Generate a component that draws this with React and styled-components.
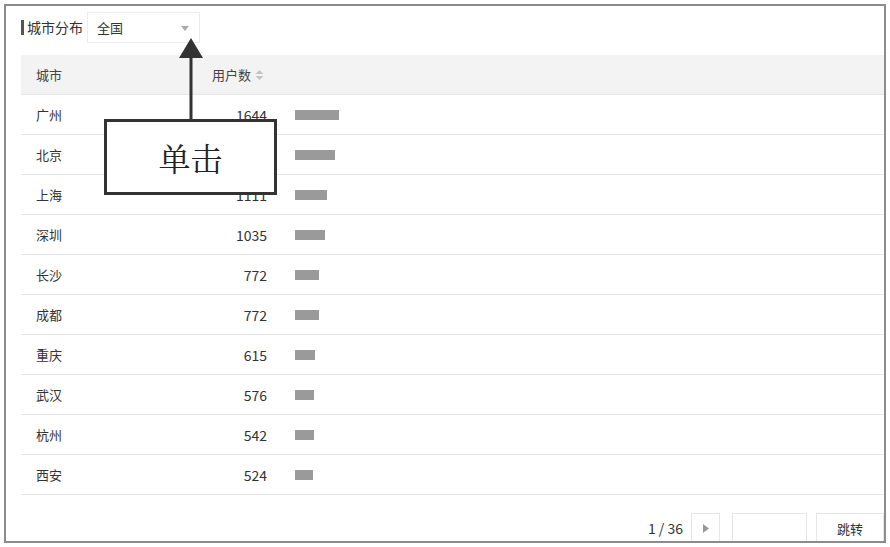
import React from 'react';
import styled, { createGlobalStyle } from 'styled-components';

const GlobalStyle = createGlobalStyle`
  html, body {
    margin: 0;
    padding: 0;
    background: #fff;
  }
  body {
    font-family: "Microsoft YaHei", "Noto Sans CJK SC", "Noto Sans", sans-serif;
    color: #333;
  }
`;

const cities = [
  { name: '广州', users: 1644 },
  { name: '北京', users: 1457 },
  { name: '上海', users: 1111 },
  { name: '深圳', users: 1035 },
  { name: '长沙', users: 772 },
  { name: '成都', users: 772 },
  { name: '重庆', users: 615 },
  { name: '武汉', users: 576 },
  { name: '杭州', users: 542 },
  { name: '西安', users: 524 },
];

// bar length grows with the count, with a small minimum
const barWidth = (n) => Math.round(6 + n * 0.0232);

export default function App() {
  return (
    <>
      <GlobalStyle />
      <Frame>
        <Toolbar>
          <Title>城市分布</Title>
          <Select>
            <span>全国</span>
            <Caret />
          </Select>
        </Toolbar>

        <Table>
          <HeadRow>
            <Cell>城市</Cell>
            <Cell>
              用户数
              <SortIcon width="9" height="10" viewBox="0 0 9 10">
                <path d="M4.5 0 L8.5 4 L0.5 4 Z" fill="#c4c4c4" />
                <path d="M4.5 10 L8.5 6 L0.5 6 Z" fill="#c4c4c4" />
              </SortIcon>
            </Cell>
            <BarCell />
          </HeadRow>
          {cities.map((c) => (
            <Row key={c.name}>
              <Cell>{c.name}</Cell>
              <NumCell>{c.users}</NumCell>
              <BarCell>
                <Bar style={{ width: barWidth(c.users) }} />
              </BarCell>
            </Row>
          ))}
        </Table>

        <Pager>
          <PageInfo>1 / 36</PageInfo>
          <NextBtn>
            <svg width="6" height="9" viewBox="0 0 6 9">
              <path d="M0 0 L6 4.5 L0 9 Z" fill="#999" />
            </svg>
          </NextBtn>
          <JumpInput />
          <JumpBtn>跳转</JumpBtn>
        </Pager>

        <Callout>
          <Arrow>
            <svg width="26" height="84" viewBox="0 0 26 84">
              <path d="M13 0 L25 20 L1 20 Z" fill="#333" />
              <rect x="11.5" y="19" width="3" height="65" fill="#333" />
            </svg>
          </Arrow>
          <CalloutBox>单击</CalloutBox>
        </Callout>
      </Frame>
    </>
  );
}

const Frame = styled.div`
  position: relative;
  box-sizing: border-box;
  margin: 4px;
  height: 539px;
  border: 2px solid #8c8c8c;
  padding: 6px 0 0 15px;
  display: flex;
  flex-direction: column;
  overflow: hidden;
  background: #fff;
`;

const Toolbar = styled.div`
  display: flex;
  align-items: center;
  gap: 4px;
  height: 31px;
`;

const Title = styled.div`
  font-size: 14px;
  color: #333;
  padding-left: 3px;
  border-left: 3px solid #555;
  line-height: 15px;
`;

const Select = styled.div`
  box-sizing: border-box;
  width: 113px;
  height: 31px;
  border: 1px solid #ececec;
  display: flex;
  align-items: center;
  justify-content: space-between;
  padding: 0 10px 0 9px;
  font-size: 13px;
  color: #333;
`;

const Caret = styled.span`
  width: 0;
  height: 0;
  border-left: 4px solid transparent;
  border-right: 4px solid transparent;
  border-top: 5px solid #aaa;
  margin-top: 2px;
`;

const Table = styled.div`
  margin-top: 12px;
  display: flex;
  flex-direction: column;
`;

const rowGrid = `
  box-sizing: border-box;
  display: grid;
  grid-template-columns: 191px 55px 1fr;
  align-items: center;
  height: 40px;
  border-bottom: 1px solid #e6e6e6;
  font-size: 13px;
`;

const HeadRow = styled.div`
  ${rowGrid}
  height: 40px;
  background: #f3f3f3;
  color: #444;
  white-space: nowrap;
`;

const Row = styled.div`
  ${rowGrid}
  color: #333;
`;

const Cell = styled.div`
  display: flex;
  align-items: center;
  &:first-child {
    padding-left: 15px;
  }
`;

const NumCell = styled.div`
  text-align: right;
  font-size: 14px;
  color: #333;
`;

const BarCell = styled.div`
  display: flex;
  align-items: center;
  padding-left: 28px;
`;

const SortIcon = styled.svg`
  margin-left: 4px;
`;

const Bar = styled.div`
  height: 10px;
  background: #9a9a9a;
`;

const Pager = styled.div`
  margin-top: 18px;
  display: flex;
  align-items: flex-start;
  justify-content: flex-end;
  height: 31px;
`;

const PageInfo = styled.div`
  font-size: 14px;
  color: #333;
  line-height: 31px;
  margin-right: 8px;
`;

const NextBtn = styled.div`
  box-sizing: border-box;
  width: 29px;
  height: 34px;
  border: 1px solid #e6e6e6;
  display: flex;
  align-items: center;
  justify-content: center;
  padding-bottom: 3px;
  margin-right: 12px;
`;

const JumpInput = styled.div`
  box-sizing: border-box;
  width: 75px;
  height: 34px;
  border: 1px solid #e6e6e6;
  margin-right: 9px;
`;

const JumpBtn = styled.div`
  box-sizing: border-box;
  width: 68px;
  height: 34px;
  border: 1px solid #e6e6e6;
  font-size: 13px;
  color: #333;
  text-align: center;
  line-height: 29px;
`;

const Callout = styled.div`
  position: absolute;
  left: 98px;
  top: 32px;
  display: flex;
  flex-direction: column;
  align-items: center;
`;

const Arrow = styled.div`
  display: flex;
  margin-bottom: -3px;
  svg {
    display: block;
  }
`;

const CalloutBox = styled.div`
  box-sizing: border-box;
  width: 173px;
  height: 76px;
  border: 3px solid #333;
  background: #fff;
  display: flex;
  align-items: center;
  justify-content: center;
  font-family: "Noto Serif CJK SC", "Liberation Serif", "Noto Sans CJK SC", serif;
  font-size: 32px;
  color: #222;
`;
